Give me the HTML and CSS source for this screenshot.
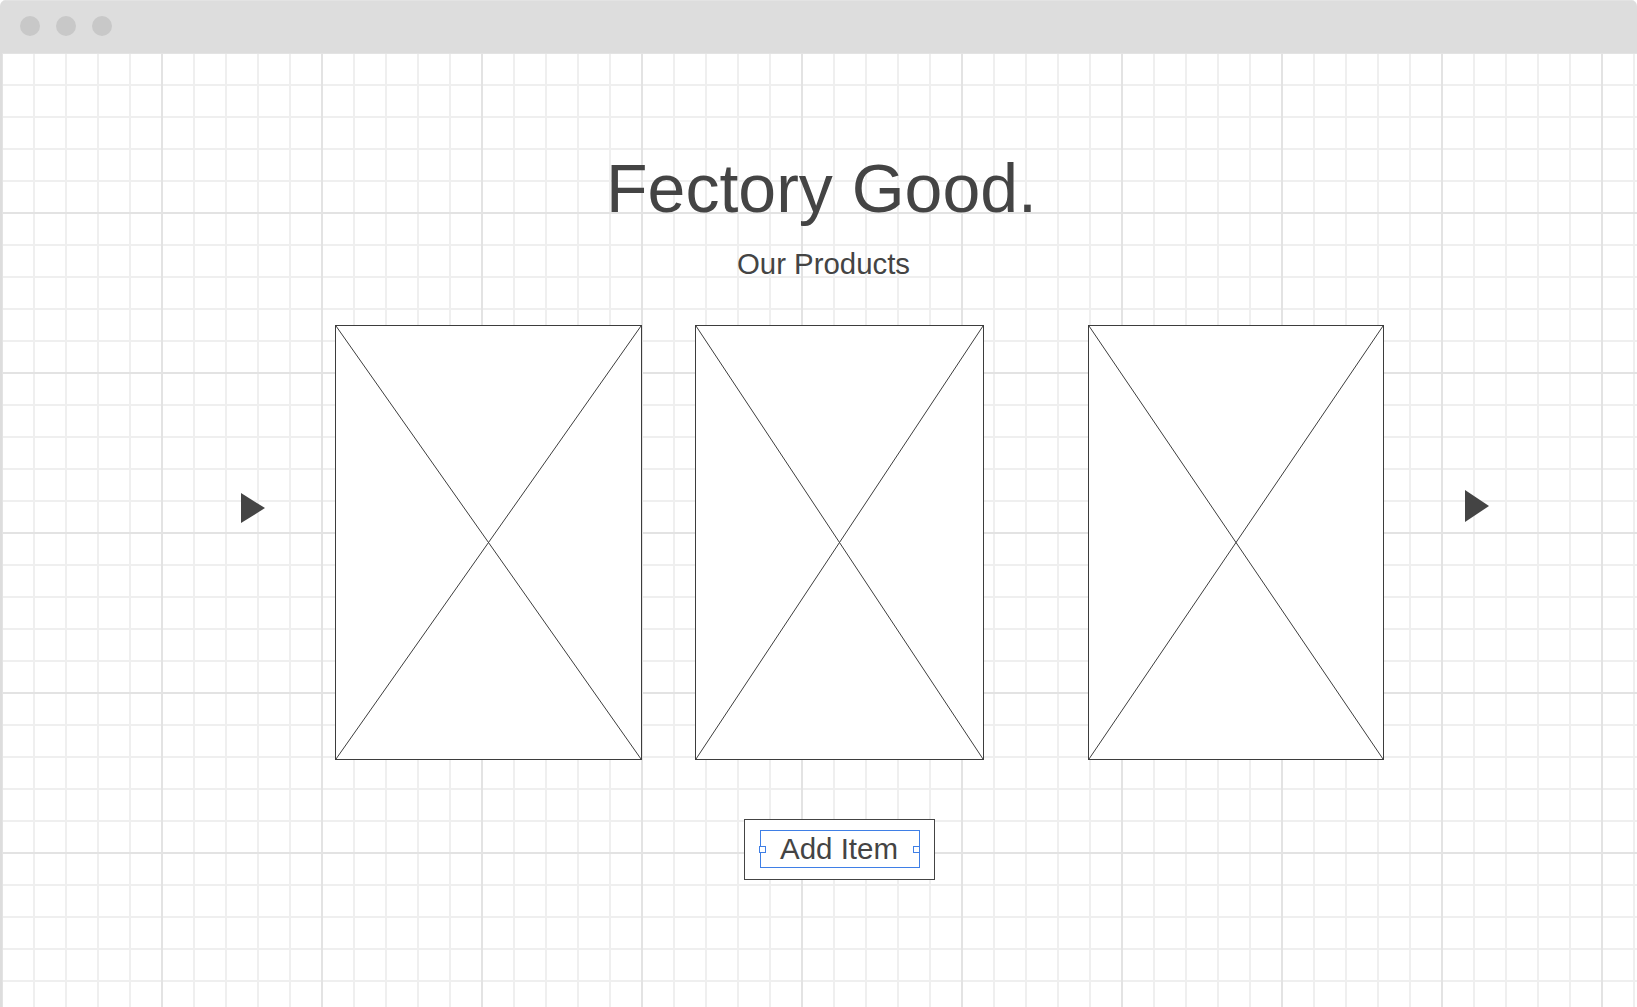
FILE: index.html
```html
<!DOCTYPE html>
<html lang="en">
<head>
<meta charset="utf-8">
<title>Fectory Good.</title>
<link rel="stylesheet" href="styles.css">
</head>
<body>
<div class="window">
  <div class="titlebar">
    <span class="dot"></span><span class="dot"></span><span class="dot"></span>
  </div>
  <main class="canvas">
    <header class="hero">
      <h1 class="title">Fectory Good.</h1>
      <p class="subtitle">Our Products</p>
    </header>
    <section class="carousel">
      <svg class="arrow arrow-left" width="24" height="30" viewBox="0 0 24 30"><polygon points="0,0 24,15 0,30"/></svg>
      <div class="card card-1">
        <svg class="ph" viewBox="0 0 100 100" preserveAspectRatio="none"><line x1="0" y1="0" x2="100" y2="100"/><line x1="100" y1="0" x2="0" y2="100"/></svg>
      </div>
      <div class="card card-2">
        <svg class="ph" viewBox="0 0 100 100" preserveAspectRatio="none"><line x1="0" y1="0" x2="100" y2="100"/><line x1="100" y1="0" x2="0" y2="100"/></svg>
      </div>
      <div class="card card-3">
        <svg class="ph" viewBox="0 0 100 100" preserveAspectRatio="none"><line x1="0" y1="0" x2="100" y2="100"/><line x1="100" y1="0" x2="0" y2="100"/></svg>
      </div>
      <svg class="arrow arrow-right" width="24" height="32" viewBox="0 0 24 32"><polygon points="0,0 24,16 0,32"/></svg>
    </section>
    <div class="actions">
      <div class="button">
        <div class="button-inner">
          <span class="handle handle-l"></span>
          <span class="label">Add Item</span>
          <span class="handle handle-r"></span>
        </div>
      </div>
    </div>
  </main>
</div>
</body>
</html>
```

FILE: styles.css
```css
* { box-sizing: border-box; }
html, body { margin: 0; padding: 0; background: #fff; }
body {
  font-family: "Liberation Sans", Arial, sans-serif;
  color: #444;
  width: 1637px;
  height: 1007px;
  overflow: hidden;
}
.window {
  width: 1637px;
  height: 1007px;
  border-radius: 6px 6px 0 0;
  overflow: hidden;
  display: flex;
  flex-direction: column;
}
.titlebar {
  height: 53px;
  flex: none;
  background: #dddddd;
  border-top: 1px solid #e3e3e3;
  display: flex;
  align-items: center;
  gap: 16px;
  padding-left: 20px;
  padding-bottom: 2px;
}
.dot {
  width: 20px;
  height: 20px;
  border-radius: 50%;
  background: #c8c8c8;
}
.canvas {
  flex: 1;
  border-left: 2px solid #dddddd;
  background-color: #fff;
  background-image:
    linear-gradient(to right, #e3e3e3 2px, transparent 2px),
    linear-gradient(to bottom, #e3e3e3 2px, transparent 2px),
    linear-gradient(to right, #efefef 2px, transparent 2px),
    linear-gradient(to bottom, #efefef 2px, transparent 2px);
  background-size: 160px 160px, 160px 160px, 32px 32px, 32px 32px;
  background-position: -1px -1px, -1px -1px, -1px -1px, -1px -1px;
  display: flex;
  flex-direction: column;
}
.hero {
  padding-top: 95px;
  padding-left: 4px;
  text-align: center;
}
.title {
  margin: 0;
  font-weight: 400;
  font-size: 68px;
  line-height: 80px;
  color: #444;
}
.subtitle {
  margin: 19px 0 0;
  padding-left: 4px;
  font-size: 29.4px;
  line-height: 34px;
  color: #444;
}
.carousel {
  display: flex;
  align-items: flex-start;
  margin-top: 44px;
  padding-left: 239px;
}
.arrow { flex: none; fill: #444; display: block; }
.arrow-left { margin-top: 168px; margin-right: 70px; }
.arrow-right { margin-top: 165px; margin-left: 81px; }
.card {
  flex: none;
  height: 435px;
  border: 1px solid #3d3d3d;
  background: #fff;
  position: relative;
}
.card-1 { width: 307px; }
.card-2 { width: 289px; margin-left: 53px; }
.card-3 { width: 296px; margin-left: 104px; }
.ph {
  display: block;
  width: 100%;
  height: 100%;
}
.ph line {
  stroke: #3d3d3d;
  stroke-width: 1;
  vector-effect: non-scaling-stroke;
}
.actions {
  display: flex;
  margin-top: 59px;
  padding-left: 742px;
}
.button {
  width: 191px;
  height: 61px;
  border: 1px solid #444;
  background: #fff;
  padding: 10px 0 0 15px;
}
.button-inner {
  position: relative;
  width: 160px;
  height: 38px;
  border: 1px solid #3f7fe6;
  display: flex;
  align-items: center;
  justify-content: center;
}
.label {
  font-size: 29.5px;
  line-height: 34px;
  color: #444;
  padding-right: 2px;
}
.handle {
  position: absolute;
  top: 50%;
  width: 7px;
  height: 7px;
  margin-top: -3px;
  background: #fff;
  border: 1px solid #3f7fe6;
}
.handle-l { left: -2px; }
.handle-r { right: -1px; }
```
